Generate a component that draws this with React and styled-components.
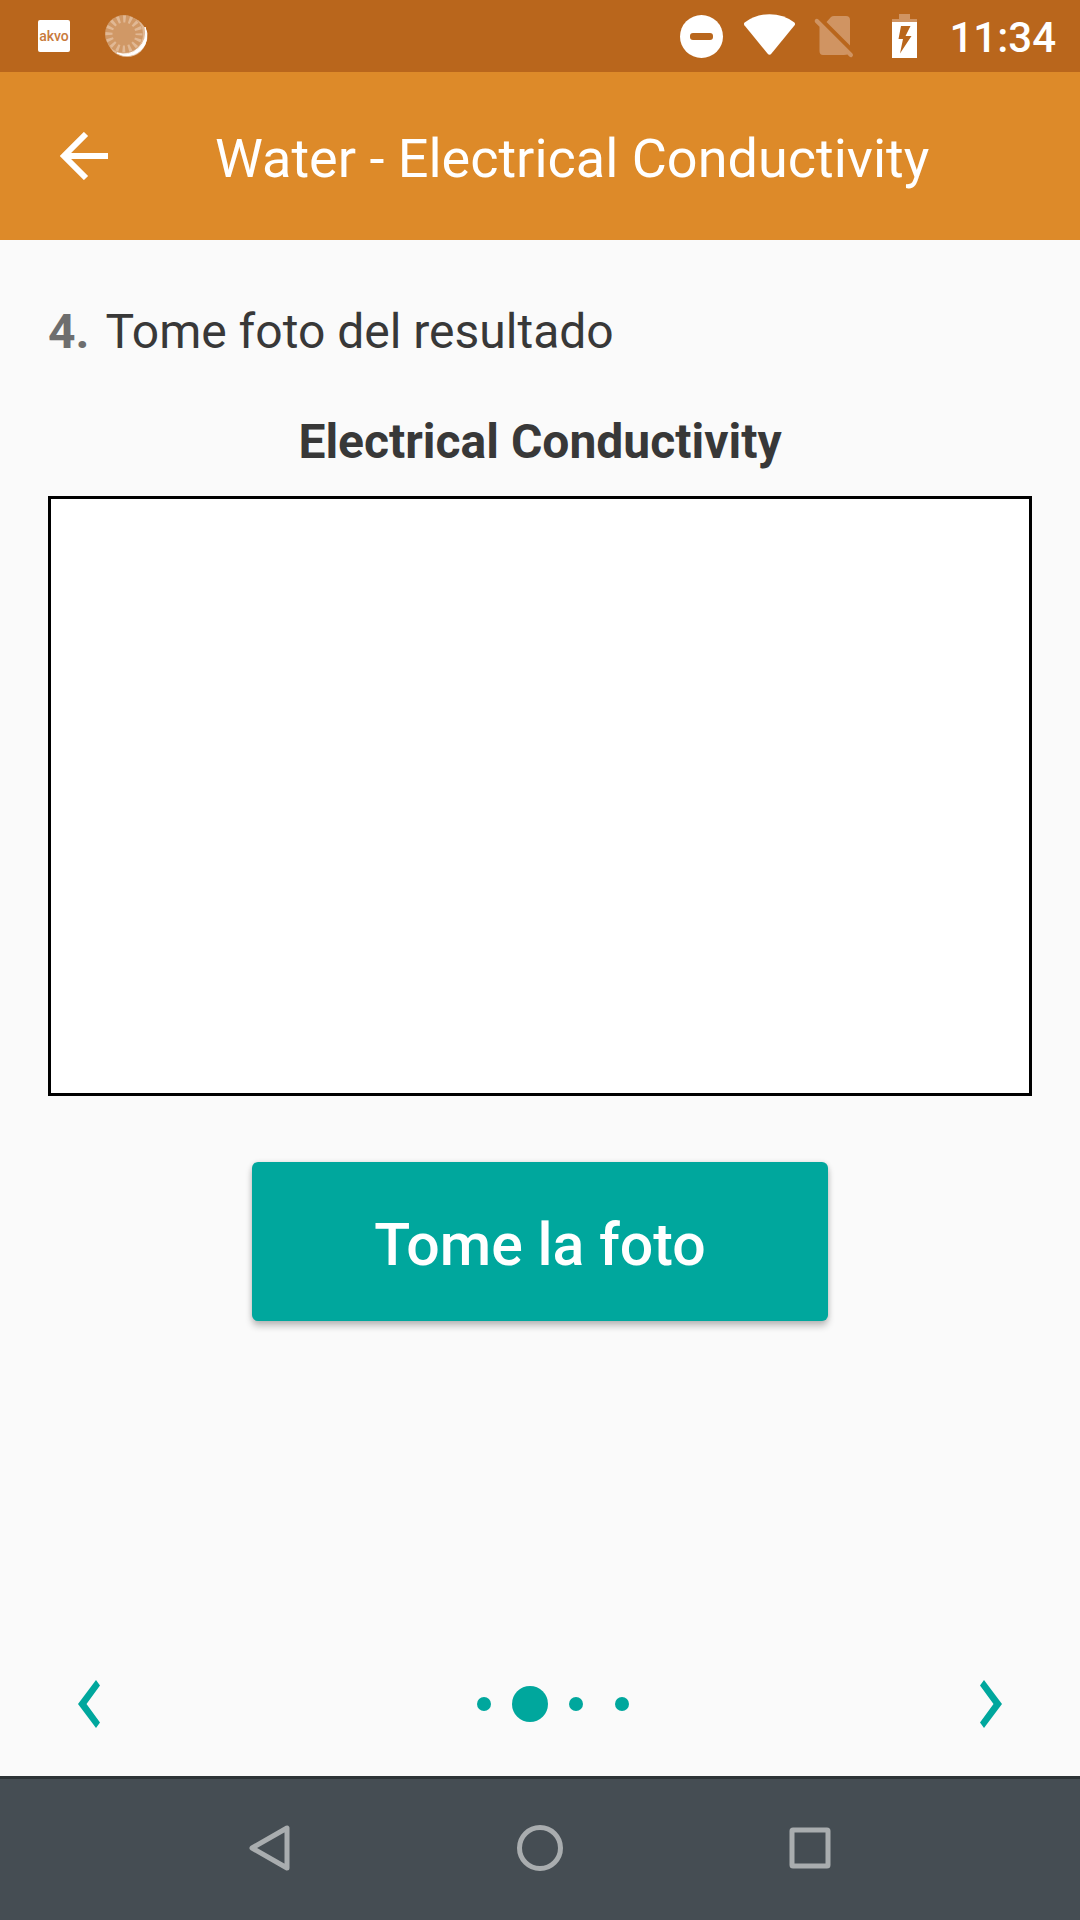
import React from "react";
import styled, { createGlobalStyle } from "styled-components";

const GlobalStyle = createGlobalStyle`
  *, *::before, *::after { box-sizing: border-box; }
  body {
    margin: 0;
    background: #fafafa;
    font-family: Roboto, "Noto Sans", sans-serif;
  }
`;

const Screen = styled.div`
  display: flex;
  flex-direction: column;
  min-height: 100vh;
  background: #fafafa;
  color: #383838;
`;

const StatusBar = styled.div`
  display: flex;
  align-items: center;
  justify-content: space-between;
  height: 72px;
  padding: 0 24px 0 36px;
  background: #b9661c;
  color: #fff;
`;

const StatusGroup = styled.div`
  display: flex;
  align-items: center;
  gap: ${({ $gap }) => $gap}px;

  svg { display: block; }
`;

const AkvoBadge = styled.span`
  width: 32px;
  height: 32px;
  margin-left: 2px;
  border-radius: 2px;
  background: #fff;
  color: #c87a3c;
  font-size: 14px;
  font-weight: 500;
  line-height: 32px;
  text-align: center;
`;

const Clock = styled.time`
  padding: 4px 0 0 1px;
  font-size: 42px;
  font-weight: 500;
  line-height: 50px;
`;

const AppBar = styled.header`
  display: flex;
  align-items: center;
  height: 168px;
  padding: 0 48px;
  background: #dd8a29;
  color: #fff;
`;

const IconButton = styled.button`
  display: flex;
  align-items: center;
  justify-content: center;
  width: ${({ $size }) => $size}px;
  height: ${({ $size }) => $size}px;
  padding: 0;
  border: 0;
  background: none;
  color: inherit;
  cursor: pointer;

  svg { display: block; }
`;

const Title = styled.h1`
  margin: 0 0 0 95px;
  padding-top: 6px;
  font-size: 54px;
  font-weight: 400;
  line-height: 64px;
  white-space: nowrap;
`;

const Content = styled.main`
  display: flex;
  flex: 1;
  flex-direction: column;
  align-items: center;
  padding: 63px 48px 0;
`;

const Step = styled.p`
  display: flex;
  align-self: stretch;
  gap: 16px;
  margin: 0 0 52px;
  font-size: 48px;
  line-height: 58px;
`;

const StepNumber = styled.strong`
  color: #6e6e6e;
  font-weight: 700;
`;

const ResultName = styled.h2`
  margin: 0 0 25px;
  font-size: 48px;
  font-weight: 700;
  line-height: 58px;
`;

const ResultFrame = styled.div`
  align-self: stretch;
  height: 600px;
  border: 3px solid #000;
  background: #fff;
`;

const PhotoButton = styled.button`
  min-width: 576px;
  margin-top: 66px;
  padding: 47px 48px 40px;
  border: 0;
  border-radius: 6px;
  background: #00a79d;
  box-shadow: 0 5px 7px rgba(0, 0, 0, 0.24), 0 0 5px rgba(0, 0, 0, 0.1);
  color: #fff;
  font-family: inherit;
  font-size: 59px;
  font-weight: 500;
  line-height: 72px;
  cursor: pointer;
`;

const Pager = styled.nav`
  display: flex;
  align-items: center;
  justify-content: space-between;
  height: 144px;
  padding: 0 41px;
  color: #00a79d;
`;

const Dots = styled.div`
  display: flex;
  align-items: center;
  padding-left: 25px;
`;

const DotSlot = styled.span`
  display: flex;
  align-items: center;
  justify-content: center;
  width: 46px;
  height: 46px;
`;

const Dot = styled.span`
  width: ${({ $active }) => ($active ? 36 : 14)}px;
  height: ${({ $active }) => ($active ? 36 : 14)}px;
  border-radius: 50%;
  background: #00a79d;
`;

const SystemBar = styled.nav`
  display: flex;
  align-items: center;
  justify-content: center;
  gap: 198px;
  height: 144px;
  padding-bottom: 3px;
  border-top: 3px solid #2d3336;
  background: #454d53;
  color: #a9adaf;
`;

const SyncIcon = () => (
  <svg width="46" height="72" viewBox="0 0 46 72" aria-hidden="true">
    <circle cx="24" cy="37" r="20" fill="#e1b894" />
    <path d="M42 27A20 20 0 0 1 14 53A22 22 0 0 0 42 27Z" fill="#fff" stroke="#fff" strokeWidth="1" />
    <circle cx="21" cy="34" r="19" fill="#d09866" />
    <circle cx="21" cy="34" r="15" fill="none" stroke="#e1b894" strokeWidth="7" strokeDasharray="2.6 3.29" strokeDashoffset="1.3" />
  </svg>
);

const DoNotDisturbIcon = () => (
  <svg width="46" height="72" viewBox="0 0 46 72" aria-hidden="true">
    <circle cx="21.5" cy="36.5" r="21.5" fill="#fff" />
    <rect x="10" y="33" width="23" height="7" rx="3" fill="#b9661c" />
  </svg>
);

const WifiIcon = () => (
  <svg width="52" height="72" viewBox="0 0 52 72" aria-hidden="true">
    <path d="M.6 22.4Q11.500 14.200 25.500 14.200T50.400 22.400Q51.600 23.800 50.600 25.200L27.500 53.600Q25.500 56 23.500 53.600L.4 25.200Q-.6 23.600 .6 22.400Z" fill="#fff" />
  </svg>
);

const NoSimIcon = () => (
  <svg width="40" height="72" viewBox="0 0 40 72" aria-hidden="true">
    <path
      d="M12.500 22L17 17Q18 16 20 16H32Q36 16 36 20V45.500ZM1.200 19.600Q2.800 18 4.400 19.600L38.400 53.600Q39.800 55 38.400 56.400Q36.800 58 35.400 56.600L33.400 54.600Q32.500 55 30 55H9Q5.500 55 5.500 51V26.700L1.200 22.400Q0 21 1.200 19.600Z"
      fill="#d09462"
    />
  </svg>
);

const BatteryIcon = () => (
  <svg width="58" height="72" viewBox="0 0 58 72" aria-hidden="true">
    <path d="M27 14H38V19H45V22H20V19H27Z" fill="#d09462" />
    <path d="M20 22H45V58H20Z" fill="#fff" />
    <path d="M29 26H38.500L33.500 36H39.500L28 53.500L31 39H26.500Z" fill="#b9661c" />
  </svg>
);

const BackArrow = () => (
  <svg width="48" height="48" viewBox="0 0 48 48" fill="none" stroke="currentColor" strokeWidth="6" aria-hidden="true">
    <path d="M26 2L4 24L26 46M6 24H48" />
  </svg>
);

const Chevron = ({ flipped }) => (
  <svg width="22" height="48" viewBox="0 0 22 48" aria-hidden="true">
    <path
      d={flipped ? "M4 0L0 5.500L13.500 24L0 42.500L4 48L22 24Z" : "M18 0L22 5.500L8.500 24L22 42.500L18 48L0 24Z"}
      fill="currentColor"
    />
  </svg>
);

const SystemIcon = ({ children }) => (
  <svg width="48" height="48" viewBox="0 0 48 48" fill="none" stroke="currentColor" strokeWidth="5" strokeLinejoin="round" aria-hidden="true">
    {children}
  </svg>
);

const steps = [1, 2, 3, 4];
const activeStep = 2;

export default function App() {
  return (
    <Screen>
      <GlobalStyle />
      <StatusBar>
        <StatusGroup $gap={33}>
          <AkvoBadge>akvo</AkvoBadge>
          <SyncIcon />
        </StatusGroup>
        <StatusGroup $gap={18}>
          <DoNotDisturbIcon />
          <WifiIcon />
          <NoSimIcon />
          <BatteryIcon />
          <Clock>11:34</Clock>
        </StatusGroup>
      </StatusBar>
      <AppBar>
        <IconButton $size={72} aria-label="Back">
          <BackArrow />
        </IconButton>
        <Title>Water - Electrical Conductivity</Title>
      </AppBar>
      <Content>
        <Step>
          <StepNumber>4.</StepNumber>
          <span>Tome foto del resultado</span>
        </Step>
        <ResultName>Electrical Conductivity</ResultName>
        <ResultFrame />
        <PhotoButton>Tome la foto</PhotoButton>
      </Content>
      <Pager aria-label="Steps">
        <IconButton $size={96} aria-label="Previous">
          <Chevron />
        </IconButton>
        <Dots>
          {steps.map((step) => (
            <DotSlot key={step}>
              <Dot $active={step === activeStep} />
            </DotSlot>
          ))}
        </Dots>
        <IconButton $size={96} aria-label="Next">
          <Chevron flipped />
        </IconButton>
      </Pager>
      <SystemBar aria-label="System navigation">
        <IconButton $size={72} aria-label="System back">
          <SystemIcon>
            <path d="M41 4V44L6 24Z" />
          </SystemIcon>
        </IconButton>
        <IconButton $size={72} aria-label="Home">
          <SystemIcon>
            <circle cx="24" cy="24" r="20.500" />
          </SystemIcon>
        </IconButton>
        <IconButton $size={72} aria-label="Recent apps">
          <SystemIcon>
            <rect x="6" y="6" width="36" height="36" rx="1" />
          </SystemIcon>
        </IconButton>
      </SystemBar>
    </Screen>
  );
}
